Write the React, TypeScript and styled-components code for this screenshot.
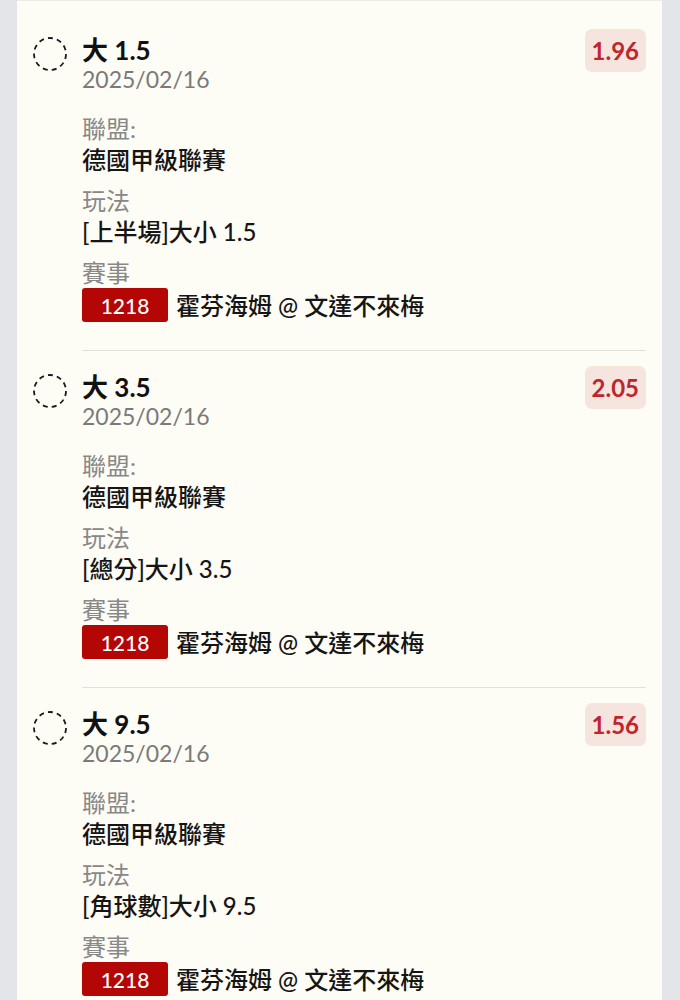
import React from "react";
import styled, {createGlobalStyle} from "styled-components";

const GlobalStyle = createGlobalStyle`
  html, body {
    margin: 0;
    padding: 0;
    background: #e4e5e8;
  }
  body {
    font-family: Lato, "Noto Sans CJK TC", sans-serif;
  }
`;

type BetType = {
    title: string;
    date: string;
    odds: string;
    league: string;
    play: string;
    code: string;
    match: string;
};

const bets: BetType[] = [
    {title: "大 1.5", date: "2025/02/16", odds: "1.96", league: "德國甲級聯賽", play: "[上半場]大小 1.5", code: "1218", match: "霍芬海姆 @ 文達不來梅"},
    {title: "大 3.5", date: "2025/02/16", odds: "2.05", league: "德國甲級聯賽", play: "[總分]大小 3.5", code: "1218", match: "霍芬海姆 @ 文達不來梅"},
    {title: "大 9.5", date: "2025/02/16", odds: "1.56", league: "德國甲級聯賽", play: "[角球數]大小 9.5", code: "1218", match: "霍芬海姆 @ 文達不來梅"},
];

const Page = styled.div`
  padding: 0 18px 0 17px;
`;

const Card = styled.div`
  background: #fdfcf5;
  border-top: 1px solid #eeece6;
  padding: 13px 16px 0 16px;
`;

const ItemRow = styled.div`
  display: flex;
  align-items: flex-start;
`;

const CircleBox = styled.div`
  width: 34px;
  height: 34px;
  flex: none;
  margin: 23px 15px 0 0;
`;

const Main = styled.div`
  flex: 1;
  padding-top: 15px;
  padding-bottom: 28px;
  border-bottom: 1px solid #e3e0da;
`;

const Header = styled.div`
  display: flex;
  justify-content: space-between;
  align-items: flex-start;
`;

const Title = styled.div`
  margin-top: 6px;
  font-size: 26px;
  line-height: 30px;
  font-weight: 700;
  color: #111;
`;

const DateText = styled.div`
  font-size: 23px;
  line-height: 29px;
  color: #7a7a7a;
`;

const Odds = styled.div`
  background: #f6e4df;
  color: #bf262c;
  border-radius: 7px;
  height: 43px;
  padding: 0 7px;
  display: flex;
  align-items: center;
  font-size: 24px;
  font-weight: 700;
`;

const Details = styled.div`
  margin-top: 19px;
  display: grid;
  gap: 10px;
`;

const Field = styled.div`
  display: flex;
  flex-direction: column;
`;

const Label = styled.div`
  font-size: 24px;
  line-height: 31px;
  color: #888;
`;

const Value = styled.div`
  font-size: 24px;
  line-height: 31px;
  font-weight: 500;
  color: #151515;
`;

const MatchRow = styled.div`
  display: flex;
  align-items: center;
  gap: 8px;
`;

const Tag = styled.div`
  width: 86px;
  height: 34px;
  border-radius: 3px;
  background: #b50606;
  color: #fff;
  font-size: 21px;
  font-weight: 500;
  display: flex;
  align-items: center;
  justify-content: center;
`;

const DashedCircle = () => (
    <svg width="34" height="34" viewBox="0 0 34 34">
        <circle cx="17" cy="17" r="16" fill="none" stroke="#1a1a1a" strokeWidth="1.8" strokeDasharray="5 4.1"/>
    </svg>
);

const BetItem = (props: {bet: BetType}) => {
    const {bet} = props;
    return (<ItemRow>
        <CircleBox><DashedCircle/></CircleBox>
        <Main>
            <Header>
                <div>
                    <Title>{bet.title}</Title>
                    <DateText>{bet.date}</DateText>
                </div>
                <Odds>{bet.odds}</Odds>
            </Header>
            <Details>
                <Field>
                    <Label>聯盟:</Label>
                    <Value>{bet.league}</Value>
                </Field>
                <Field>
                    <Label>玩法</Label>
                    <Value>{bet.play}</Value>
                </Field>
                <Field>
                    <Label>賽事</Label>
                    <MatchRow>
                        <Tag>{bet.code}</Tag>
                        <Value>{bet.match}</Value>
                    </MatchRow>
                </Field>
            </Details>
        </Main>
    </ItemRow>);
};

export default function App() {
    return (<Page>
        <GlobalStyle/>
        <Card>
            {bets.map((b, i) => <BetItem key={i} bet={b}/>)}
        </Card>
    </Page>);
}
